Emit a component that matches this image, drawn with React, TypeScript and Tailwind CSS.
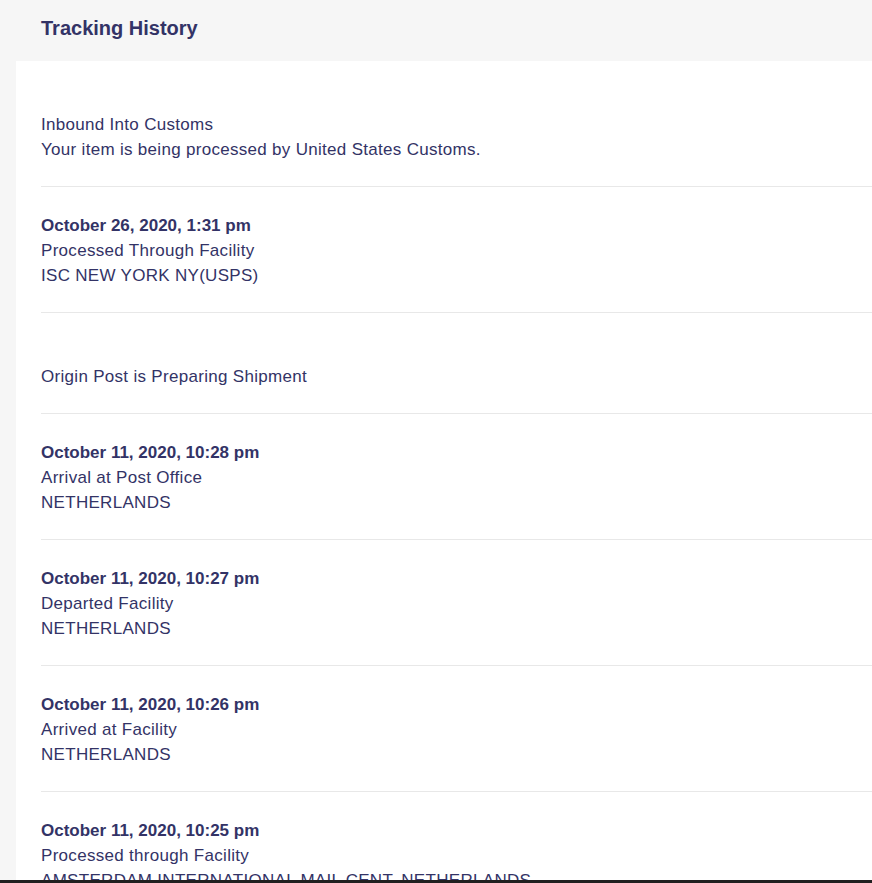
const EVENTS = [
  { date: "", status: "Inbound Into Customs", location: "Your item is being processed by United States Customs." },
  { date: "October 26, 2020, 1:31 pm", status: "Processed Through Facility", location: "ISC NEW YORK NY(USPS)" },
  { date: "", status: "Origin Post is Preparing Shipment", location: "" },
  { date: "October 11, 2020, 10:28 pm", status: "Arrival at Post Office", location: "NETHERLANDS" },
  { date: "October 11, 2020, 10:27 pm", status: "Departed Facility", location: "NETHERLANDS" },
  { date: "October 11, 2020, 10:26 pm", status: "Arrived at Facility", location: "NETHERLANDS" },
  { date: "October 11, 2020, 10:25 pm", status: "Processed through Facility", location: "AMSTERDAM INTERNATIONAL MAIL CENT, NETHERLANDS" },
];

export default function App() {
  return (
    <div
      className="flex h-[883px] flex-col overflow-hidden bg-[#f6f6f6] text-[#333366]"
      style={{ fontFamily: '"Liberation Sans", Arial, sans-serif' }}
    >
      <div className="flex min-h-0 flex-1 flex-col overflow-hidden">
        <header className="flex h-[61px] shrink-0 items-center px-[41px] pb-[6px]">
          <h2 className="text-[20px] font-bold">Tracking History</h2>
        </header>
        <div className="ml-4 flex-1 bg-white pl-[25px]">
          {EVENTS.map((ev, i) => (
            <div key={i} className="border-b border-[#e8e8e8] pt-[26px] pb-[24px] text-[17px] leading-[25px]">
              <p className="h-[25px] font-bold">{ev.date}</p>
              <p className="tracking-[0.3px]">{ev.status}</p>
              {ev.location && <p className="whitespace-nowrap tracking-[0.3px]">{ev.location}</p>}
            </div>
          ))}
        </div>
      </div>
      <div className="h-[3px] shrink-0 bg-[#202020]" />
    </div>
  );
}
